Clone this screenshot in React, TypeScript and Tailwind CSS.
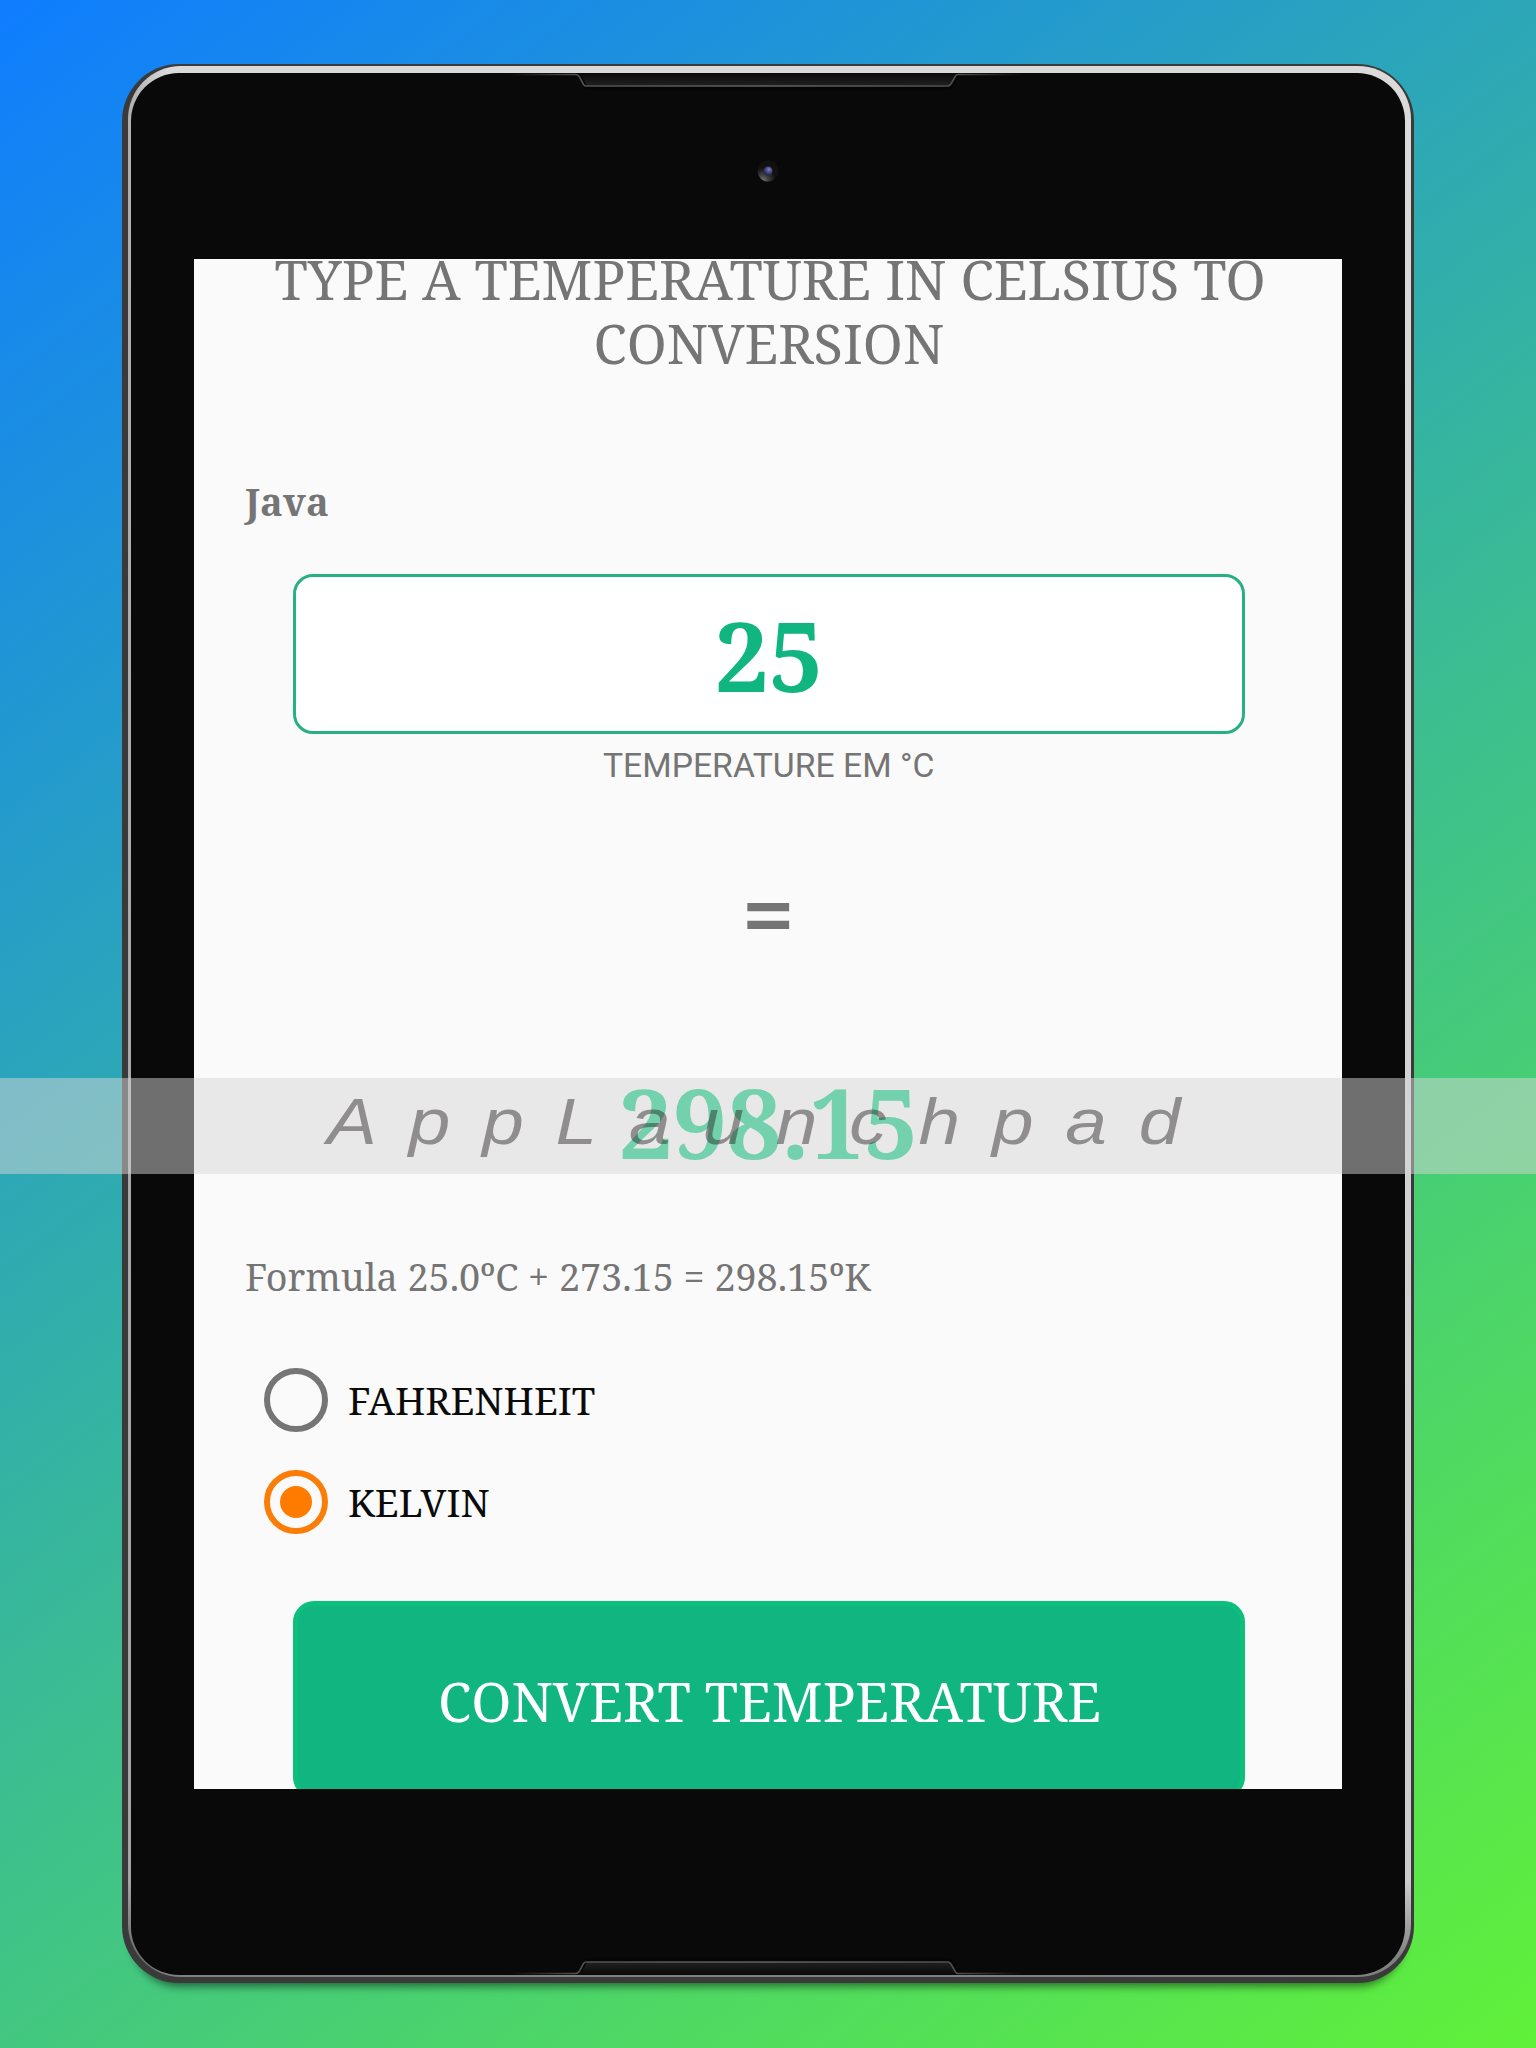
import { useLayoutEffect, useRef, useState } from "react";

type FitProps = { text: string; width: number; className?: string; origin?: "left" | "center" };

/** One line of text, condensed or widened horizontally to a given width. */
function Fit({ text, width, className = "", origin = "left" }: FitProps) {
  const ref = useRef<HTMLSpanElement>(null);
  const [scale, setScale] = useState(1);
  useLayoutEffect(() => {
    if (ref.current && ref.current.offsetWidth > 0) setScale(width / ref.current.offsetWidth);
  }, [text, width]);
  const outer = origin === "center" ? "flex justify-center" : "flex justify-start";
  return (
    <span className={outer} style={{ width }}>
      <span
        ref={ref}
        className={`inline-block shrink-0 whitespace-nowrap ${origin === "center" ? "origin-center" : "origin-left"} ${className}`}
        style={{ transform: `scaleX(${scale})` }}
      >
        {text}
      </span>
    </span>
  );
}

const serif = "font-['Noto_Serif','Droid_Serif','DejaVu_Serif_Condensed','DejaVu_Serif',serif]";

function Grille({ flip = false }: { flip?: boolean }) {
  return (
    <svg width="560" height="20" viewBox="0 0 560 20" className={flip ? "block -scale-y-100" : "block"} fill="none">
      <defs>
        <linearGradient id="plate" x1="0" y1="0" x2="0" y2="1">
          <stop offset="0" stopColor="#090909" />
          <stop offset="1" stopColor="#212121" />
        </linearGradient>
        <linearGradient id="edge" gradientUnits="userSpaceOnUse" x1="0" y1="0" x2="560" y2="0">
          <stop offset="0.04" stopColor="#505050" stopOpacity="0" />
          <stop offset="0.16" stopColor="#505050" />
          <stop offset="0.5" stopColor="#626262" />
          <stop offset="0.84" stopColor="#505050" />
          <stop offset="0.96" stopColor="#505050" stopOpacity="0" />
        </linearGradient>
      </defs>
      <path d="M92 0 L99 13 H464 L471 0 Z" fill="url(#plate)" />
      <path d="M92 2 Q94 2 95 4 L99 12 Q100 13.5 102 13.5 L462 13.5 Q464 13.5 465.5 12 L470 4 Q471 2 473 2" stroke="#050505" strokeWidth="3.4" transform="translate(0 1)" />
      <path d="M0 1.500 H90 Q92 1.500 93.500 4 L97.500 11.500 Q98.500 13 100 13 L462 13 Q463.500 13 465 11 L469 4 Q470 1.500 472 1.500 H560" stroke="url(#edge)" strokeWidth="1.6" />
    </svg>
  );
}

function Camera() {
  return (
    <svg width="24" height="24" viewBox="0 0 24 24" className="block">
      <defs>
        <radialGradient id="rim" cx="0.25" cy="0.95" r="0.6">
          <stop offset="0" stopColor="#777" />
          <stop offset="0.4" stopColor="#444" />
          <stop offset="1" stopColor="#101010" />
        </radialGradient>
        <radialGradient id="lens" cx="0.6" cy="0.35" r="0.65">
          <stop offset="0" stopColor="#8583bd" />
          <stop offset="0.5" stopColor="#44477f" />
          <stop offset="1" stopColor="#20233f" />
        </radialGradient>
      </defs>
      <circle cx="12" cy="12" r="10.500" fill="url(#rim)" />
      <circle cx="12" cy="12" r="4.600" fill="url(#lens)" />
    </svg>
  );
}

function Radio({ label, width, checked = false }: { label: string; width: number; checked?: boolean }) {
  return (
    <div className="flex h-16 items-center">
      <div
        className={`flex size-16 items-center justify-center rounded-full border-[6px] ${checked ? "border-[#fb7d08]" : "border-[#757575]"}`}
      >
        {checked && <div className="size-8 rounded-full bg-[#ff7b00]" />}
      </div>
      <div className="ml-5 text-[38px] leading-[48px] text-[#0a0a0a]">
        <Fit text={label} width={width} />
      </div>
    </div>
  );
}

export default function App() {
  return (
    <div className="relative h-[2048px] w-[1536px] overflow-hidden bg-[linear-gradient(143.13deg,#0f7dff,#60f139)] pt-16 pl-[122px]">
      {/* Tablet body */}
      <div className="h-[1919px] w-[1292px] rounded-[57px] bg-[#3a3a3a] pt-[2px] pr-[3px] pb-[6px] pl-[6px] shadow-[0_14px_10px_-11px_rgba(0,0,0,0.55)]">
        <div className="h-full w-full rounded-[53px] bg-[linear-gradient(to_right,rgba(0,0,0,0.2),transparent_40px),linear-gradient(to_bottom,#dadada,#cccccc_95%,#808080_99%)] pt-[7px] pr-[6px] pb-[2px] pl-[3px]">
          <div className="relative flex h-full w-full flex-col rounded-[48px] bg-[#090909] pl-[63px]">
            <div className="absolute top-0 left-[355px]">
              <Grille />
            </div>
            <div className="absolute bottom-0 left-[355px]">
              <Grille flip />
            </div>
            <div className="flex h-[186px] w-[1148px] items-center justify-center pt-[9px]">
              <Camera />
            </div>

            {/* Screen */}
            <main className={`h-[1530px] w-[1148px] overflow-hidden bg-[#fafafa] text-[#757575] ${serif}`}>
              <h1 className="-mt-[12px] flex flex-col items-center text-[54.5px] leading-[64px]">
                <Fit text="TYPE A TEMPERATURE IN CELSIUS TO" width={991} origin="center" className="ml-[4px]" />
                <Fit text="CONVERSION" width={351} origin="center" className="ml-[2px]" />
              </h1>
              <div className="mt-[102px] ml-[51px] text-[38px] leading-[48px] font-bold">
                <Fit text="Java" width={84} />
              </div>
              <div className="mt-[49px] ml-[99px] flex h-40 w-[952px] items-center justify-center rounded-[20px] border-[3px] border-[#27b082] bg-white pr-px text-[97px] leading-none font-bold text-[#10b57f]">
                <Fit text="25" width={109} origin="center" />
              </div>
              <div className="mt-[12px] flex justify-center pl-[2px] font-[Roboto,sans-serif] text-[33.5px] leading-10">
                <Fit text="TEMPERATURE EM °C" width={331} origin="center" />
              </div>
              <div className="mt-[79px] flex justify-center pl-px font-[Roboto,sans-serif] text-[86px] leading-[100px] font-medium">
                <Fit text="=" width={55} origin="center" />
              </div>
              <div className="mt-[106px] flex justify-center text-[97px] leading-[100px] font-bold text-[#12cc84]">
                <Fit text="298.15" width={300} origin="center" />
              </div>
              <div className="mt-[81px] ml-[51px] text-[38px] leading-[48px]">
                <Fit text="Formula 25.0ºC + 273.15 = 298.15ºK" width={626} />
              </div>
              <div className="mt-[68px] ml-[70px] flex flex-col gap-[38px]">
                <Radio label="FAHRENHEIT" width={247} />
                <Radio label="KELVIN" width={142} checked />
              </div>
              <button className="mt-[67px] ml-[99px] flex h-[197px] w-[952px] items-center justify-center rounded-[21px] border-[5px] border-[#0dbf7c] bg-[#10b57f] pt-1 text-[54.5px] leading-none text-white">
                <Fit text="CONVERT TEMPERATURE" width={663} origin="center" />
              </button>
            </main>
          </div>
        </div>
      </div>

      {/* Watermark band */}
      <div className="absolute top-[1078px] left-0 flex h-24 w-full items-center bg-[#d6d6d6]/50 pb-[10px] pl-[327px]">
        <span className="origin-left scale-x-[1.15] font-['Liberation_Sans',sans-serif] text-[65px] leading-none tracking-[27.7px] whitespace-nowrap text-[#242020]/45 italic">
          AppLaunchpad
        </span>
      </div>
    </div>
  );
}
